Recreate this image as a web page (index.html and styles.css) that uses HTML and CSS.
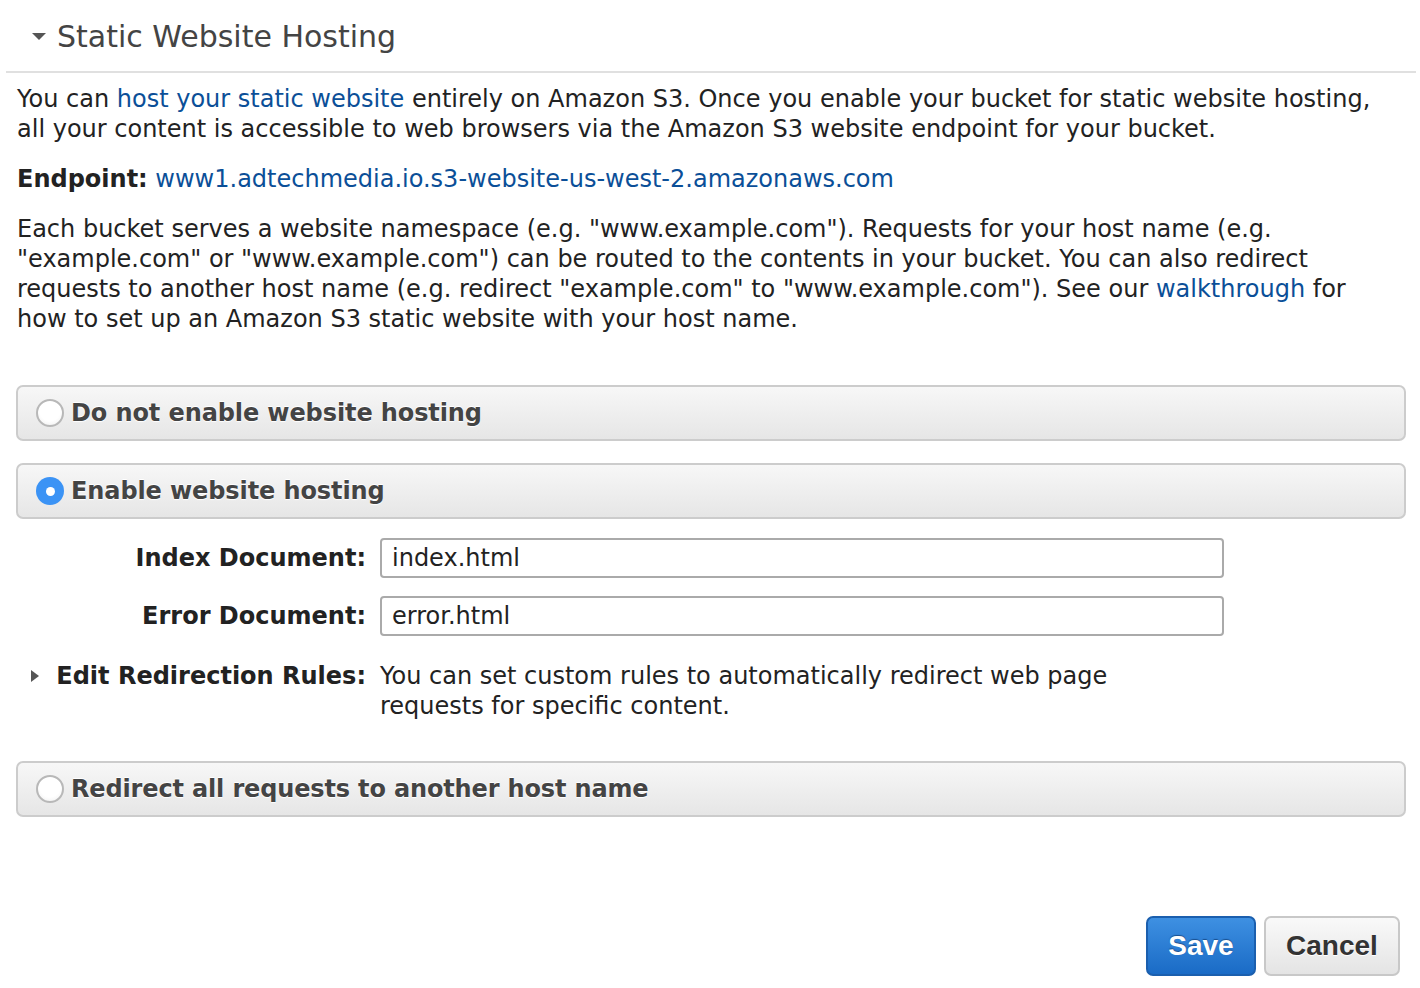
FILE: index.html
```html
<!DOCTYPE html>
<html>
<head>
<meta charset="utf-8">
<link rel="stylesheet" href="styles.css">
</head>
<body>
<div class="panel">
  <div class="header">
    <span class="tri-down"></span>
    <h1 class="title">Static Website Hosting</h1>
  </div>
  <div class="content">
    <p class="txt">You can <a class="lnk" href="#">host your static website</a> entirely on Amazon S3. Once you enable your bucket for static website hosting, all your content is accessible to web browsers via the Amazon S3 website endpoint for your bucket.</p>
    <p class="txt"><b>Endpoint:</b> <a class="lnk" href="#">www1.adtechmedia.io.s3-website-us-west-2.amazonaws.com</a></p>
    <p class="txt">Each bucket serves a website namespace (e.g. "www.example.com"). Requests for your host name (e.g. "example.com" or "www.example.com") can be routed to the contents in your bucket. You can also redirect requests to another host name (e.g. redirect "example.com" to "www.example.com"). See our <a class="lnk" href="#">walkthrough</a> for how to set up an Amazon S3 static website with your host name.</p>

    <div class="opt opt-first">
      <span class="radio"></span>
      <span class="opt-label">Do not enable website hosting</span>
    </div>
    <div class="opt opt-second">
      <span class="radio radio-on"><span class="dot"></span></span>
      <span class="opt-label">Enable website hosting</span>
    </div>

    <div class="form">
      <div class="flabel">Index Document:</div>
      <div class="finput">index.html</div>
      <div class="flabel">Error Document:</div>
      <div class="finput">error.html</div>
      <div class="flabel flabel-rules"><span class="tri-right"></span>Edit Redirection Rules:</div>
      <div class="rules-text">You can set custom rules to automatically redirect web page<br>requests for specific content.</div>
    </div>

    <div class="opt opt-third">
      <span class="radio"></span>
      <span class="opt-label opt-label-narrow">Redirect all requests to another host name</span>
    </div>

    <div class="actions">
      <button class="btn btn-save">Save</button>
      <button class="btn btn-cancel">Cancel</button>
    </div>
  </div>
</div>
</body>
</html>
```

FILE: styles.css
```css
html, body {
  margin: 0;
  padding: 0;
  background: #ffffff;
}
body {
  font-family: "DejaVu Sans", Verdana, sans-serif;
  color: #222222;
}
.panel {
  margin-left: 6px;
  width: 1410px;
}
.header {
  border-bottom: 2px solid #e0e0e0;
  display: flex;
  align-items: center;
  padding-left: 26px;
  box-sizing: border-box;
  height: 73px;
}
.tri-down {
  width: 0;
  height: 0;
  border-left: 7px solid transparent;
  border-right: 7px solid transparent;
  border-top: 7px solid #555;
  margin-right: 11px;
  margin-top: 2px;
}
.title {
  margin: 0;
  font-weight: normal;
  font-size: 30px;
  color: #444444;
  line-height: 1;
  margin-top: 3px;
}
.content {
  padding: 11px 10px 0 10px;
}
.txt {
  margin: 0 0 20px 1px;
  max-width: 1370px;
  font-size: 24px;
  line-height: 30px;
}
.txt b {
  font-weight: bold;
}
.lnk {
  color: #0b4f98;
  text-decoration: none;
}
.opt {
  height: 56px;
  box-sizing: border-box;
  border: 2px solid #cccccc;
  border-radius: 7px;
  background: linear-gradient(#f7f7f7, #e6e6e6);
  display: flex;
  align-items: center;
  padding-left: 18px;
}
.opt-first {
  margin-top: 51px;
}
.opt-second {
  margin-top: 22px;
}
.opt-third {
  margin-top: 40px;
}
.radio {
  width: 28px;
  height: 28px;
  box-sizing: border-box;
  border-radius: 50%;
  border: 2px solid #b8b8b8;
  background: radial-gradient(circle at 50% 40%, #ffffff 55%, #ececec);
  margin-right: 7px;
  display: flex;
  align-items: center;
  justify-content: center;
  flex: none;
}
.radio-on {
  border: none;
  background: #3b93f5;
}
.dot {
  width: 9px;
  height: 9px;
  border-radius: 50%;
  background: #ffffff;
}
.opt-label {
  font-weight: bold;
  font-size: 24px;
  color: #444444;
  letter-spacing: -0.1px;
  text-shadow: 0 1px 1px #ffffff, 0 -1px 0 #ffffff;
  white-space: nowrap;
}
.opt-label-narrow {
  letter-spacing: -0.15px;
}
.form {
  display: grid;
  grid-template-columns: 350px 844px;
  column-gap: 14px;
  row-gap: 18px;
  margin-top: 19px;
  align-items: center;
}
.flabel {
  text-align: right;
  font-weight: bold;
  font-size: 24px;
  color: #222222;
  white-space: nowrap;
}
.finput {
  height: 40px;
  box-sizing: border-box;
  border: 2px solid #aaaaaa;
  border-radius: 4px;
  padding-left: 10px;
  font-size: 24px;
  line-height: 36px;
  color: #222222;
}
.flabel-rules {
  align-self: start;
  margin-top: 7px;
  line-height: 30px;
  position: relative;
}
.tri-right {
  position: absolute;
  left: 15px;
  top: 9px;
  width: 0;
  height: 0;
  border-top: 6px solid transparent;
  border-bottom: 6px solid transparent;
  border-left: 8px solid #555;
}
.rules-text {
  margin-top: 7px;
  font-size: 24px;
  line-height: 30px;
  align-self: start;
}
.actions {
  display: flex;
  justify-content: flex-end;
  gap: 8px;
  margin-top: 99px;
  margin-right: 6px;
}
.btn {
  height: 60px;
  box-sizing: border-box;
  border-radius: 7px;
  font-family: "Liberation Sans", Arial, sans-serif;
  font-weight: bold;
  font-size: 28px;
  padding: 0;
  cursor: pointer;
}
.btn-save {
  width: 110px;
  border: 2px solid #1b5fae;
  background: linear-gradient(#3e90e2, #1a6bc6);
  color: #ffffff;
  text-shadow: 0 -1px 1px #1a4f8e;
}
.btn-cancel {
  width: 136px;
  border: 2px solid #c8c8c8;
  background: linear-gradient(#f9f9f9, #e4e4e4);
  color: #333333;
  text-shadow: 0 1px 0 #ffffff;
}
```
